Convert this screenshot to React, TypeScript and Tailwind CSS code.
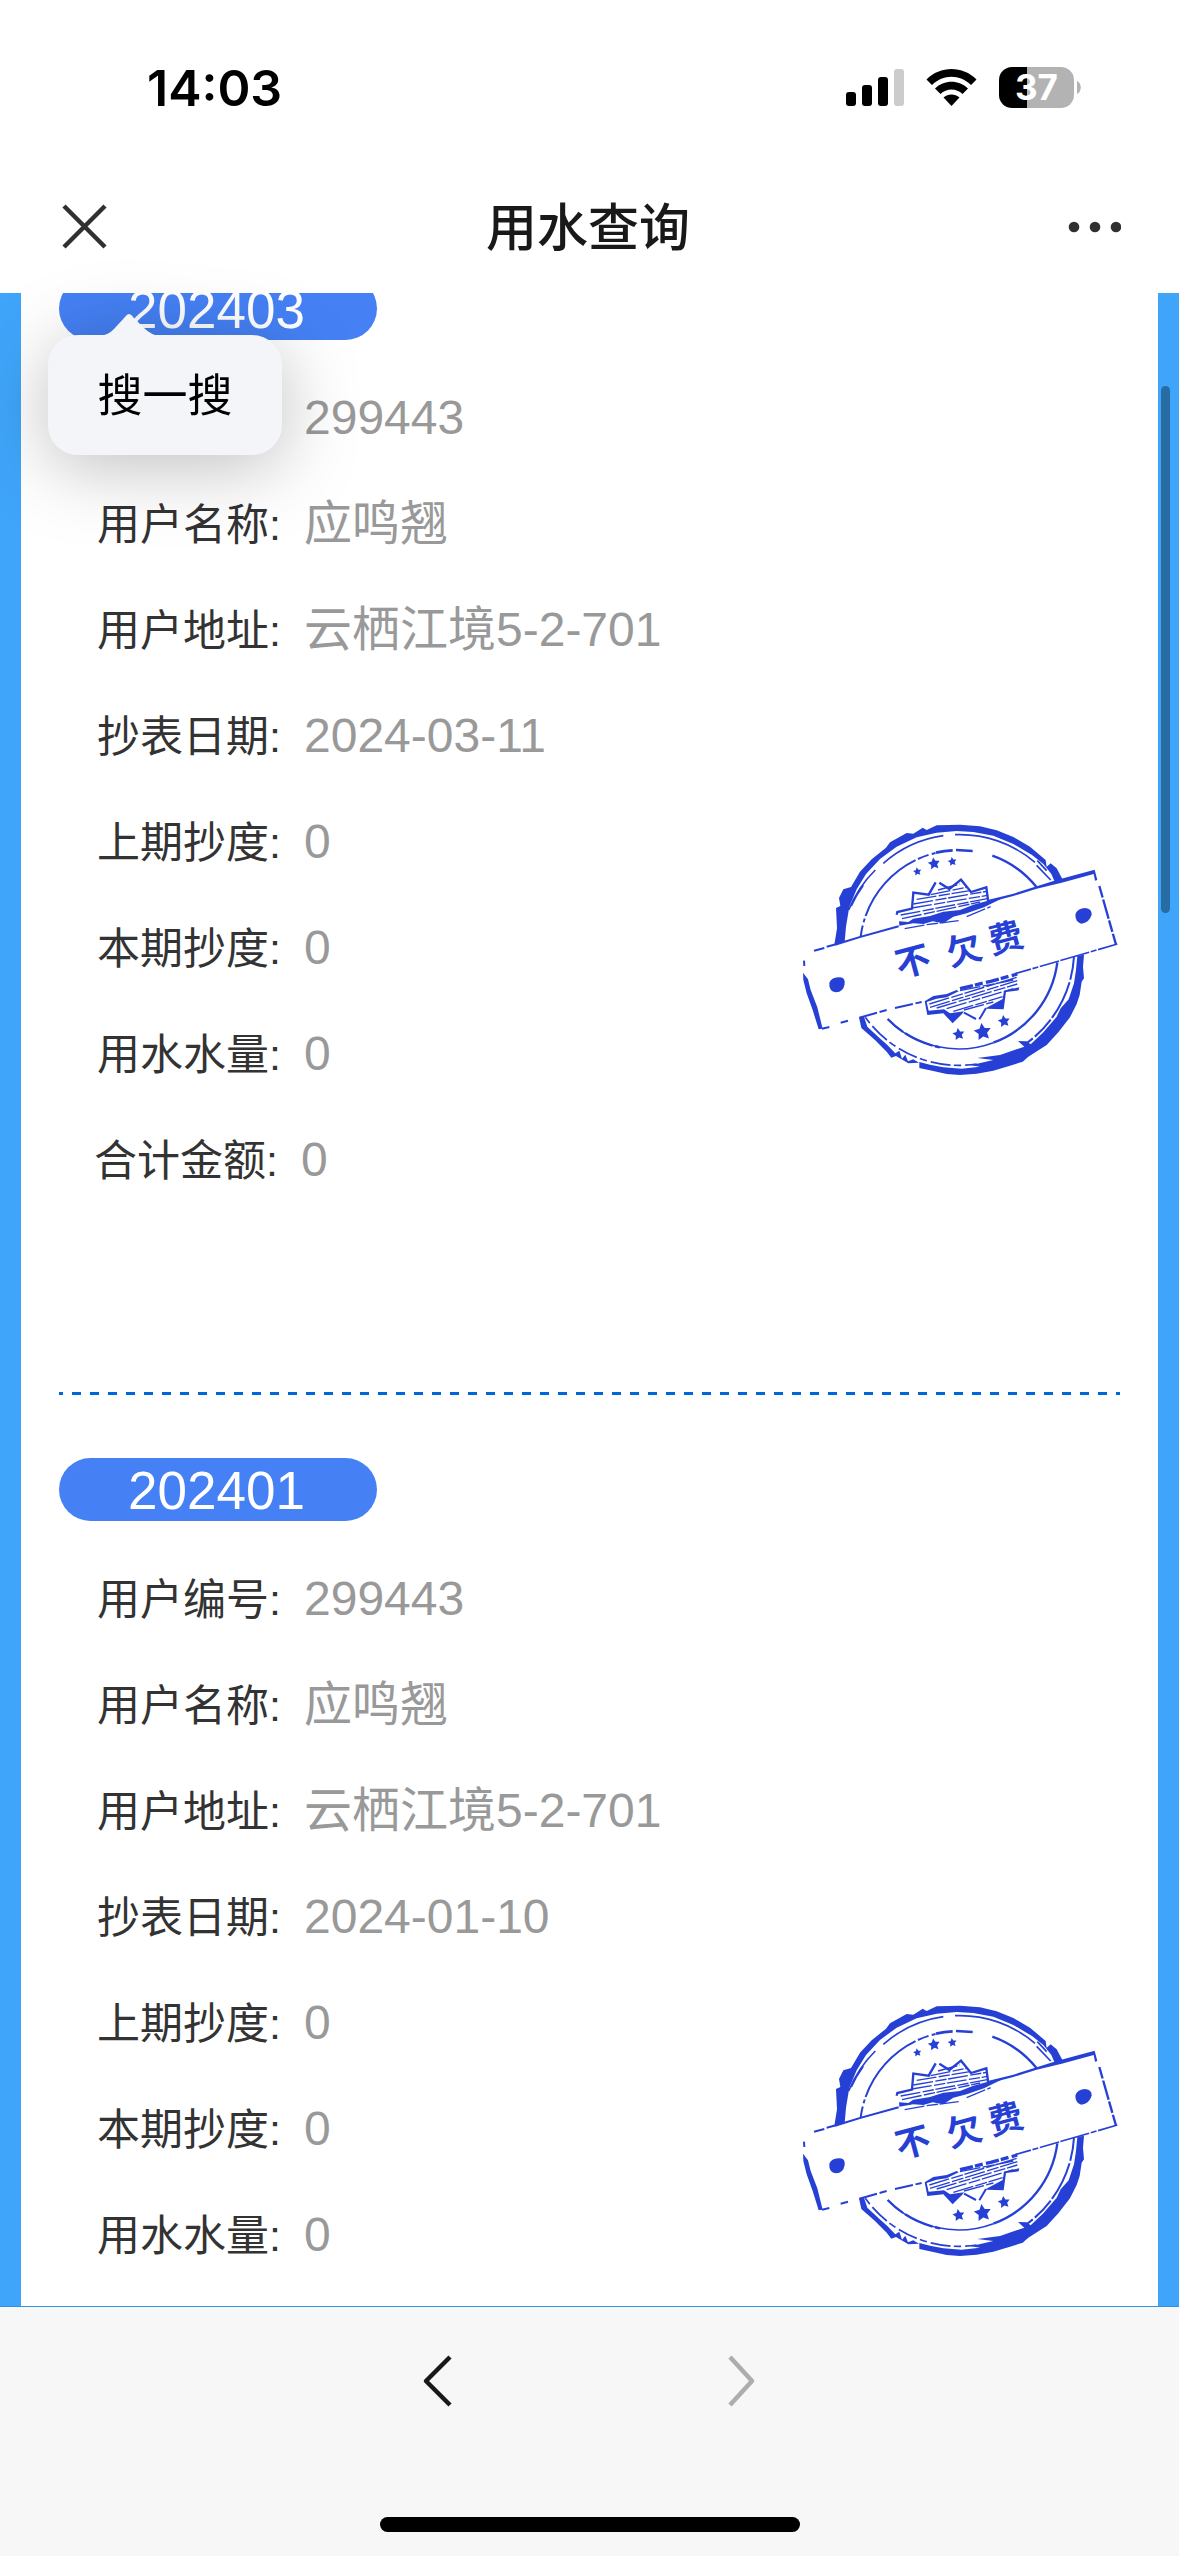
import clsx from "clsx";

const records = [
  {
    period: "202403",
    fields: [
      { label: "用户编号:", value: "299443" },
      { label: "用户名称:", value: "应鸣翘" },
      { label: "用户地址:", value: "云栖江境5-2-701" },
      { label: "抄表日期:", value: "2024-03-11" },
      { label: "上期抄度:", value: "0" },
      { label: "本期抄度:", value: "0" },
      { label: "用水水量:", value: "0" },
      { label: "合计金额:", value: "0" },
    ],
  },
  {
    period: "202401",
    fields: [
      { label: "用户编号:", value: "299443" },
      { label: "用户名称:", value: "应鸣翘" },
      { label: "用户地址:", value: "云栖江境5-2-701" },
      { label: "抄表日期:", value: "2024-01-10" },
      { label: "上期抄度:", value: "0" },
      { label: "本期抄度:", value: "0" },
      { label: "用水水量:", value: "0" },
      { label: "合计金额:", value: "0" },
    ],
  },
];

const stars = [
  { x: 412, y: 215, r: 13 },
  { x: 462, y: 191, r: 19 },
  { x: 517, y: 185, r: 14 },
  { x: 536, y: 703, r: 19 },
  { x: 608, y: 696, r: 27 },
  { x: 672, y: 664, r: 19 },
];

function starPoints(x: number, y: number, r: number) {
  return Array.from({ length: 10 }, (_, i) => {
    const radius = i % 2 === 0 ? r : r * 0.5;
    const angle = (i * Math.PI) / 5 - Math.PI / 2 - 0.15;
    return `${(x + radius * Math.cos(angle)).toFixed(1)},${(y + radius * Math.sin(angle)).toFixed(1)}`;
  }).join(" ");
}

function StatusBar() {
  return (
    <div className="flex h-[174px] shrink-0 items-center justify-between pl-[147px] pr-[98px]">
      <span className="pt-0.5 font-[Inter,sans-serif] text-[50px] font-semibold leading-none">
        14:03
      </span>
      <div className="flex items-center">
        <svg width="58" height="37" viewBox="0 0 58 37">
          <rect x="0" y="23" width="10" height="14" rx="3" />
          <rect x="16" y="16" width="10" height="21" rx="3" />
          <rect x="32" y="8" width="10" height="29" rx="3" />
          <rect x="48" y="0" width="10" height="37" rx="3" fill="#cccccc" />
        </svg>
        <svg className="ml-[22px]" width="51" height="37" viewBox="0 0 51 37">
          <path d="M0.5 10.5C14-3.5 37-3.5 50.5 10.5L45 16C34 5 17 5 6 16Z" />
          <path d="M9 19.5C18 10.5 33 10.5 42 19.5L36.5 25C30.5 19 20.5 19 14.5 25Z" />
          <path d="M17.5 28.500C22 24.5 29 24.5 33.5 28.5L25.5 37Z" />
        </svg>
        <div className="ml-[22px] flex h-[41px] w-[75px] items-center justify-center rounded-[13px] bg-[linear-gradient(to_right,#000_28px,#b3b3b3_28px)] font-[Inter,sans-serif] text-[35px] font-bold leading-none text-white">
          37
        </div>
        <svg className="ml-[3px]" width="4" height="13" viewBox="0 0 4 13">
          <path d="M0 0C5 2 5 11 0 13Z" fill="#b3b3b3" />
        </svg>
      </div>
    </div>
  );
}

function NavBar() {
  return (
    <header className="flex h-[119px] shrink-0 items-start justify-between pl-[57px] pr-[58px]">
      <button type="button" aria-label="关闭" className="mt-[25px]">
        <svg width="56" height="56" viewBox="0 0 56 56" stroke="#303030" strokeWidth="4.5">
          <path d="M7 7L48 48M48 7L7 48" />
        </svg>
      </button>
      <h1 className="mt-[17px] text-[51px] font-medium leading-[76px] text-[#191919]">
        用水查询
      </h1>
      <button type="button" aria-label="更多" className="mt-[25px]">
        <svg width="58" height="56" viewBox="0 0 58 56" fill="#303030">
          <circle cx="11" cy="28" r="5.3" />
          <circle cx="32" cy="28" r="5.3" />
          <circle cx="53" cy="28" r="5.3" />
        </svg>
      </button>
    </header>
  );
}

function Stamp() {
  return (
    <svg
      className="mb-[133px] shrink-0 self-end"
      width="320"
      height="260"
      viewBox="60 60 960 780"
      fill="#2640d6"
      stroke="none"
    >
      {/* Worn outer ring */}
      <path d="M163 434L171 385L168 324L181 318L177 294L190 268L213 261L240 215L275 178L318 143L330 127L380 99L400 101L428 83L440 90L470 76L540 74L600 79L650 91L700 111L750 140L797 180L800 200L812 190L830 205L850 242L826 250L814 222L790 192L756 165L700 132L640 107L580 96L530 93L470 98L410 112L350 140L300 177L258 222L230 268L208 320L198 380L194 426Z" />
      <path d="M912 464L909 500L912 535L905 545L899 585L890 612L870 652L835 697L800 735L745 770L728 785L690 797L640 812L590 821L540 825L500 822L463 814L418 804L418 786L450 794L490 802L545 806L600 800L572 796L640 780L592 774L660 765L733 740L714 723L740 724L752 733L790 697L830 650L842 625L866 598L882 550L888 510L892 468Z" />
      <path d="M237 652L244 684L285 720L320 755L334 773L348 768L385 790L417 788L400 778L384 784L376 764L366 776L358 752L346 760L322 735L296 712L262 680L252 650Z" />

      {/* Thin rings */}
      <g fill="none" stroke="#2640d6">
        <path strokeWidth="5" d="M310 190A346 346 0 0 1 490 107M525 104A346 346 0 0 1 765 187M770 196L812 240M772 182L800 212" />
        <path strokeWidth="5" d="M206 330A352 352 0 0 1 286 210M214 318A346 346 0 0 1 250 256" />
        <path strokeWidth="6" strokeDasharray="70 8 120 6" d="M882 470A346 346 0 0 1 742 728" />
        <path strokeWidth="5" strokeDasharray="22 12 60 10" d="M256 652A346 346 0 0 0 590 792" />
        <path strokeWidth="6" strokeDasharray="34 10 12 8 230 8" d="M242 410A297 297 0 0 1 470 158" />
        <path strokeWidth="8" d="M468 158A297 297 0 0 1 518 151M528 150L578 153" />
        <path strokeWidth="7" d="M637 167A297 297 0 0 1 770 262" />
        <path strokeWidth="7" d="M832 487A297 297 0 0 1 640 728" />
        <path strokeWidth="5" d="M640 728A297 297 0 0 1 323 657" />
        <path strokeWidth="7" strokeDasharray="60 8 90 8" d="M323 657A297 297 0 0 0 480 742" />
      </g>

      {/* Upper badge */}
      <g fill="none" stroke="#2640d6">
        <path strokeWidth="7" d="M350 344L352 336L396 326L400 278L446 284L467 247M478 248L508 267L543 239L573 276L619 262L624 300" />
        <path strokeWidth="4" strokeDasharray="60 7 34 5" d="M474 270L540 252M452 284L560 262M410 298L570 272M400 312L620 274M396 324L622 286M362 345L622 296M366 356L600 306M374 386L440 374L536 362M560 350L632 320" />
      </g>
      <path d="M357 364L385 366L400 356L450 348L490 335L540 330L580 314L640 298L664 296L612 322L560 340L520 350L490 370L458 364L430 372L400 370L358 377Z" />

      {/* Lower badge */}
      <path d="M434 604L460 588L500 582L530 570L536 574L500 592L470 596L440 606L446 632L492 628L510 640L552 634L546 642L518 670L490 640L442 645Z" />
      <path d="M618 624L668 597L672 572L718 562L716 571L678 576L671 628L620 626Z" />
      <g fill="none" stroke="#2640d6">
        <path strokeWidth="6" d="M618 624L598 658M552 638L588 657" />
        <path strokeWidth="10" strokeDasharray="40 6 24 10" d="M540 566L632 544L712 522" />
        <path strokeWidth="4" strokeDasharray="62 7 36 5" d="M448 612L710 532M450 622L712 542M470 624L712 552M500 626L700 566M520 634L668 590M552 630L640 606M540 572L700 540" />
      </g>

      {stars.map((star) => (
        <polygon key={star.x} points={starPoints(star.x, star.y, star.r)} />
      ))}

      {/* Banner outline */}
      <path d="M168 430L240 408L355 376L357 382L240 414L166 437Z" />
      <path d="M620 301L700 281L830 240L944 209L952 240L945 242L941 222L845 248L770 266L700 288L622 308Z" />
      <g fill="none" stroke="#2640d6">
        <path strokeWidth="6" strokeDasharray="32 9 5 9" d="M102 452L136 443M140 440L168 433" />
        <path strokeWidth="7" strokeDasharray="36 6 60 5" d="M958 258L1008 434" />
        <path strokeWidth="5" strokeDasharray="60 5 18 5 90 4" d="M1012 432L706 521" />
        <path strokeWidth="6" strokeDasharray="55 8 30 7" d="M238 653L320 630M345 624L425 606" />
        <path strokeWidth="6" d="M126 686L148 681M182 668L204 662M72 482L73 498" />
      </g>
      <path d="M69 518L84 538L92 570L112 622L128 686L116 688L98 630L80 580L70 540Z" />
      <path d="M148 548Q154 532 180 532Q196 532 194 552Q190 576 168 577Q146 574 148 548Z" />
      <path d="M886 344Q892 324 916 324Q936 326 935 344Q928 368 904 371Q886 366 886 344Z" />

      <g
        className="font-['Noto_Sans_CJK_SC',sans-serif] font-bold"
        fontSize="104"
        textAnchor="middle"
      >
        <text transform="translate(408 520) rotate(-15)">不</text>
        <text transform="translate(562 486) rotate(-15)">欠</text>
        <text transform="translate(686 450) rotate(-15)">费</text>
      </g>
    </svg>
  );
}

function Record({ record }: { record: (typeof records)[number] }) {
  return (
    <section>
      <h2 className="h-[63px] w-[318px] rounded-full bg-[#4581f5] pl-[69px] text-[53px] leading-[65px] text-white">
        {record.period}
      </h2>
      <div className="mt-[25px] flex justify-between">
        <dl className="pl-[38px]">
          {record.fields.map((field, index) => (
            <div
              key={field.label}
              className={clsx(
                "flex h-[106px] items-baseline leading-[106px]",
                index === record.fields.length - 1 && "-ml-[3px]"
              )}
            >
              <dt className="w-[207px] text-[43px] text-[#333333]">{field.label}</dt>
              <dd className="text-[48px] text-[#999999]">{field.value}</dd>
            </div>
          ))}
        </dl>
        <Stamp />
      </div>
      <div className="mb-[63px] mt-[179px] h-[3px] bg-[repeating-linear-gradient(to_right,#0067d8_0_4px,transparent_4px_13px,#0067d8_13px_18px)]" />
    </section>
  );
}

function SearchPopover() {
  return (
    <div className="absolute left-12 top-[335px] drop-shadow-[0_12px_36px_rgba(0,0,0,0.25)]">
      <svg className="absolute -top-[22px] left-[52px]" width="60" height="23" viewBox="0 0 60 23">
        <path d="M0 23C6 22 10 20 14 16L25 4Q29 -2 33 4L44 15Q51 22 60 23Z" fill="#f3f5f9" />
      </svg>
      <button
        type="button"
        className="h-[120px] w-[234px] rounded-[30px] bg-[#f3f5f9] pt-[3px] text-[45px] leading-none"
      >
        搜一搜
      </button>
    </div>
  );
}

function BottomBar() {
  return (
    <footer className="flex h-[250px] shrink-0 flex-col items-center justify-between border-t border-[#2f92e0] bg-[#f7f7f7] pb-6 pt-[46px]">
      <nav className="flex gap-[248px]">
        <button type="button" aria-label="后退">
          <svg width="56" height="56" viewBox="0 0 56 56" fill="none" stroke="#191919" strokeWidth="4.5">
            <path d="M40 4L16 28L40 52" strokeLinejoin="round" />
          </svg>
        </button>
        <button type="button" aria-label="前进" disabled>
          <svg width="56" height="56" viewBox="0 0 56 56" fill="none" stroke="#adadad" strokeWidth="4.5">
            <path d="M16 4L38 28L16 52" strokeLinejoin="round" />
          </svg>
        </button>
      </nav>
      <div className="h-[15px] w-[420px] rounded-full bg-black" />
    </footer>
  );
}

export default function App() {
  return (
    <div className="relative flex h-screen flex-col overflow-hidden bg-white font-['Liberation_Sans','Noto_Sans_CJK_SC',sans-serif] text-black">
      <StatusBar />
      <NavBar />
      <main className="relative min-h-0 flex-1 overflow-hidden border-x-[21px] border-[#3fa5fa] bg-white px-[38px]">
        <div className="-mt-4">
          {records.map((record) => (
            <Record key={record.period} record={record} />
          ))}
        </div>
      </main>
      {/* Scroll indicator */}
      <div className="absolute right-[9px] top-[386px] h-[527px] w-[9px] rounded-full bg-[#296ca3]" />
      <SearchPopover />
      <BottomBar />
    </div>
  );
}
